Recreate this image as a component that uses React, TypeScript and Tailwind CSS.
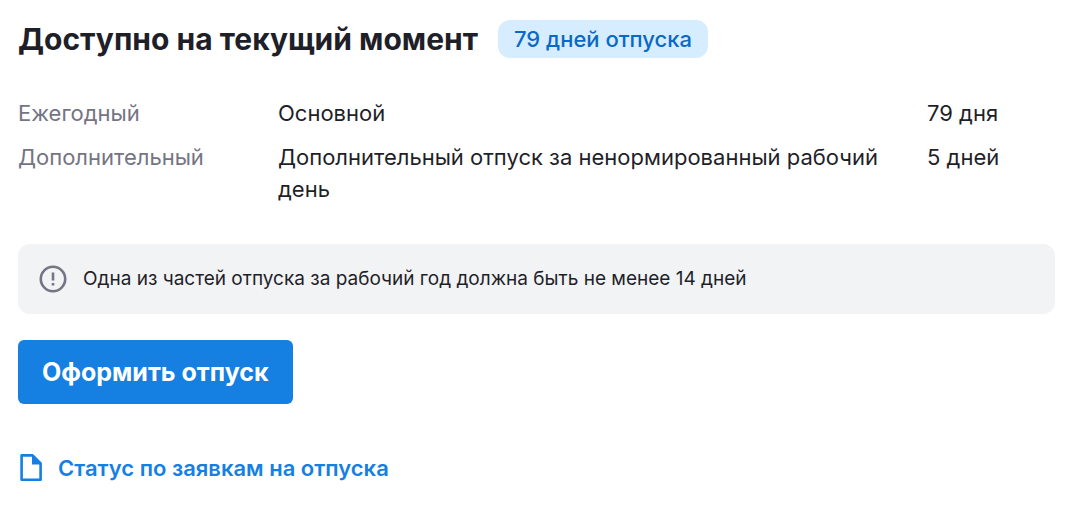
import React from "react";

interface VacationRow {
    type: string;
    name: string;
    amount: string;
}

const rows: VacationRow[] = [
    { type: "Ежегодный", name: "Основной", amount: "79 дня" },
    {
        type: "Дополнительный",
        name: "Дополнительный отпуск за ненормированный рабочий день",
        amount: "5 дней",
    },
];

const InfoIcon: React.FC = () => (
    <svg
        className="h-7 w-7 shrink-0 text-[#747484]"
        viewBox="0 0 28 28"
        fill="none"
        stroke="currentColor"
        strokeWidth="2.6"
        aria-hidden="true"
    >
        <circle cx="14" cy="14" r="12.2" />
        <path d="M14 7.5v8M14 18v2.5" />
    </svg>
);

const FileIcon: React.FC = () => (
    <svg
        className="h-7 w-6 shrink-0"
        viewBox="0 0 24 28"
        fill="none"
        aria-hidden="true"
    >
        <path
            d="M4.2 1.4h11l8 8v16.4h-19z"
            stroke="currentColor"
            strokeWidth="2.6"
            strokeLinejoin="round"
            transform="translate(-0.6 0)"
        />
        <path d="M14 1v9.6h9.4z" fill="currentColor" />
    </svg>
);

const App: React.FC = () => {
    return (
        <main className="bg-white px-[18px] pt-5 pb-7 font-['Inter','Liberation_Sans',sans-serif] text-[#1f1f29]">
            <div className="flex flex-wrap items-center gap-x-5 gap-y-2">
                <h1 className="text-[30px] leading-[38px] font-bold">
                    Доступно на текущий момент
                </h1>
                <span className="rounded-xl bg-[#d5edff] px-4 text-[22px] leading-[38px] font-medium text-[#0b68c4]">
                    79 дней отпуска
                </span>
            </div>

            <table className="mt-[39px] w-full table-fixed text-left text-[22px] leading-8">
                <tbody>
                    {rows.map((row) => (
                        <tr key={row.type} className="align-top">
                            <th
                                scope="row"
                                className="w-[25%] pb-3 font-normal text-[#747484]"
                            >
                                {row.type}
                            </th>
                            <td className="pr-6 pb-3">{row.name}</td>
                            <td className="w-[131px] pb-3">{row.amount}</td>
                        </tr>
                    ))}
                </tbody>
            </table>

            <div className="mt-[27px] mr-[3px] flex items-center gap-4 rounded-xl bg-[#f2f3f5] px-[21px] py-5">
                <InfoIcon />
                <p className="text-[19px] leading-[30px]">
                    Одна из частей отпуска за рабочий год должна быть не менее
                    14 дней
                </p>
            </div>

            <button
                type="button"
                className="mt-[26px] rounded-md bg-[#1580e2] px-6 text-[25px] leading-[64px] font-bold text-white"
            >
                Оформить отпуск
            </button>

            <div className="mt-12">
                <a
                    href="#status"
                    className="inline-flex items-center gap-4 text-[22px] leading-8 font-semibold text-[#1580e2]"
                >
                    <FileIcon />
                    Статус по заявкам на отпуска
                </a>
            </div>
        </main>
    );
};

export default App;
